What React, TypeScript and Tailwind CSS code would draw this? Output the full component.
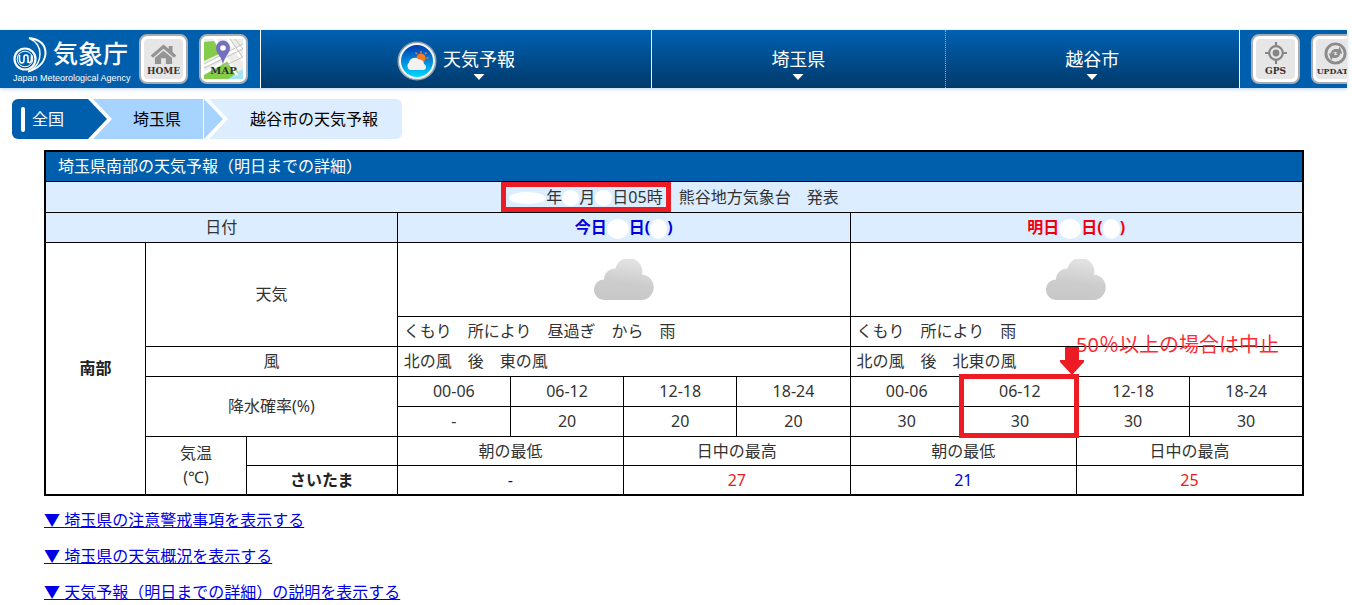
import type { ReactNode } from 'react';

const hours = ['00-06', '06-12', '12-18', '18-24'];
const rainToday = ['-', '20', '20', '20'];
const rainTomorrow = ['30', '30', '30', '30'];

const details = [
  '埼玉県の注意警戒事項を表示する',
  '埼玉県の天気概況を表示する',
  '天気予報（明日までの詳細）の説明を表示する',
];

function ToolButton({ label, size, children }: { label: string; size: string; children: ReactNode }) {
  return (
    <button
      type="button"
      className="relative h-[50px] w-[49px] shrink-0 rounded-lg border-2 border-[#a9adb1] bg-white p-[3px]"
    >
      <span className="relative flex h-full w-full flex-col items-center rounded-sm bg-[#e6e6e6]">
        {children}
        <span className={`absolute inset-x-0 bottom-[2px] flex justify-center font-['DejaVu_Serif',serif] leading-3 font-bold text-[#333] ${size}`}>
          {label}
        </span>
      </span>
    </button>
  );
}

function HomeIcon() {
  return (
    <svg viewBox="0 0 28 21" className="mt-[5px] h-[20px] w-[27px]" fill="#949494">
      <path d="M14 0.500 L0.500 12 L3 14.500 L14 5 L25 14.500 L27.500 12 L23.500 8.500 V2 H19.500 V5 Z" />
      <path d="M14 7 L5 14.500 V21 H11.500 V15 H16.500 V21 H23 V14.500 Z" />
    </svg>
  );
}

function MapIcon() {
  return (
    <svg viewBox="0 0 39 40" className="absolute inset-0 h-full w-full">
      <rect width="39" height="40" fill="#ededea" />
      <path d="M0 3 L10 2 L17 14 L0 22 Z" fill="#85cc4a" />
      <path d="M0 36 L24 22 L37 36 L32 40 H0 Z" fill="#85cc4a" />
      <path d="M24 40 L39 30 V40 Z" fill="#a5e3f5" />
      <path d="M0 27 L39 7 M11 0 L33 36 M0 34 L22 22 M24 0 L39 22" stroke="#fff" strokeWidth="2.500" fill="none" />
      <path d="M0 25 L39 5 M0 29 L39 10 M26 0 L39 19 M31 0 L39 10 M20 27 L39 18" stroke="#c4c4c0" strokeWidth="1" fill="none" />
      <path d="M19 26 C18 17 12 15 12 9 A7 7.500 0 0 1 26 9 C26 15 20 17 19 26 Z" fill="#7470bd" />
      <circle cx="19" cy="9" r="2.800" fill="#fff" />
    </svg>
  );
}

function GpsIcon() {
  return (
    <svg viewBox="0 0 22 22" className="mt-[3px] size-[22px]" stroke="#858585" fill="none" strokeWidth="2.200">
      <circle cx="11" cy="11" r="6.800" />
      <circle cx="11" cy="11" r="3.400" fill="#858585" stroke="none" />
      <path d="M11 0 V5 M11 17 V22 M0 11 H5 M17 11 H22" />
    </svg>
  );
}

function UpdateIcon() {
  return (
    <svg viewBox="0 0 24 24" className="mt-[3px] size-[23px]">
      <circle cx="12" cy="12" r="10" fill="none" stroke="#8c8c8c" strokeWidth="3" />
      <path d="M7 13 C7 8 11 6.500 15 7.500 L16.500 5 L19 12 L12.500 12.500 L13.500 10.500 C11 10 9 11 7 13 Z" fill="#8c8c8c" />
      <path d="M17 11 C17 16 13 17.500 9 16.500 L7.500 19 L5 12 L11.500 11.500 L10.500 13.500 C13 14 15 13 17 11 Z" fill="#8c8c8c" />
    </svg>
  );
}

function Logo() {
  return (
    <a href="#" className="ml-[13px] block w-[116px] text-white">
      <span className="flex h-[37px] items-center gap-1">
        <svg viewBox="0 0 36 36" className="mt-1 size-9 shrink-0" fill="none" stroke="#fff">
          <circle cx="12" cy="22" r="10.500" strokeWidth="2.200" />
          <circle cx="12" cy="22" r="7.800" strokeWidth="1" />
          <path
            d="M6.500 18 V22 Q6.500 26 9 26 Q11 26 11 23 V20.500 Q11 18 13 18 Q15 18 15 20.500 V26 M15 23 Q15 26 17 25.500 Q18.500 25 18.500 22 V18"
            strokeWidth="1.600"
          />
          <path d="M16 1 Q27 6 27 17 Q27 28 17 34" strokeWidth="1.500" />
          <path d="M16 1 Q33 3 32.500 17 Q31 30 15 34.500" strokeWidth="2" />
        </svg>
        <span className="text-[25px] leading-9 font-medium whitespace-nowrap">気象庁</span>
      </span>
      <span className="block font-['Liberation_Sans',sans-serif] text-[9px] leading-3 whitespace-nowrap">
        Japan Meteorological Agency
      </span>
    </a>
  );
}

function WeatherIcon() {
  return (
    <svg viewBox="0 0 40 42" className="mt-1 h-[42px] w-10">
      <defs>
        <linearGradient id="sky" x1="0" y1="0" x2="0" y2="1">
          <stop offset="0" stopColor="#0038b0" />
          <stop offset="1" stopColor="#00d8ff" />
        </linearGradient>
      </defs>
      <circle cx="20" cy="21" r="18.800" fill="#f4f4f4" stroke="#8fa0ae" strokeWidth="1.500" />
      <circle cx="20" cy="21" r="16" fill="url(#sky)" />
      <circle cx="24" cy="18" r="4.500" fill="#f47a24" />
      <path d="M24 11 V13 M29.500 12.500 L28 14 M31.500 18 H29.500 M18.500 12.500 L20 14" stroke="#f47a24" strokeWidth="1.500" />
      <path d="M13 30 A4.500 4.500 0 0 1 12 22.500 A6 6 0 0 1 22 19.500 A4.500 4.500 0 0 1 27 24 A3.200 3.200 0 0 1 27 30 Z" fill="#f2f2f2" />
    </svg>
  );
}

function Cloud() {
  return (
    <svg viewBox="0 0 60 41" className="mx-auto h-[41px] w-[60px]">
      <defs>
        <linearGradient id="cloud" x1="0.600" y1="0" x2="0.400" y2="1">
          <stop offset="0" stopColor="#e4e4e4" />
          <stop offset="0.600" stopColor="#cccccc" />
          <stop offset="1" stopColor="#c8c8c8" />
        </linearGradient>
      </defs>
      <path
        d="M10.500 41 A10.300 10.300 0 0 1 10 20.400 A11 11 0 0 1 21.500 9.500 A13.500 13.500 0 0 1 48 15.500 A12.800 12.800 0 0 1 48 41 Z"
        fill="url(#cloud)"
      />
    </svg>
  );
}

function MenuItem({ label, icon, className }: { label: string; icon?: ReactNode; className: string }) {
  return (
    <button type="button" className={`flex items-center justify-center gap-1.5 text-lg text-white ${className}`}>
      {icon}
      <span className="flex flex-col items-center pt-1">
        <span className="leading-8">{label}</span>
        <svg viewBox="0 0 12 6" className="-mt-px h-[6px] w-3" fill="#fff">
          <path d="M0.500 0 H11.500 L6 6 Z" />
        </svg>
      </span>
    </button>
  );
}

function Chevron({ left, right }: { left: string; right: string }) {
  return (
    <svg viewBox="0 0 24 40" className="h-10 w-6 shrink-0">
      <rect width="24" height="40" fill={right} />
      <path d="M0 0 H5 L24 20 L5 40 H0 Z" fill="#fff" />
      <path d="M0 0 L19 20 L0 40 Z" fill={left} />
    </svg>
  );
}

function Blank({ className }: { className: string }) {
  return <span className={`inline-block rounded-[50%] bg-white align-middle ${className}`} />;
}

function DayHeading({ day, color }: { day: string; color: string }) {
  return (
    <th colSpan={4} className={`border border-black font-bold ${color}`}>
      {day}
      <Blank className="h-5 w-[22px]" />
      日(
      <Blank className="h-5 w-[17px]" />)
    </th>
  );
}

export default function App() {
  return (
    <div lang="ja" className="bg-white pt-[30px] font-['Noto_Sans','Noto_Sans_CJK_JP',sans-serif] text-base text-[#333]">
      <header className="mr-[5px] flex h-[58px] overflow-hidden bg-[#005fad] shadow-[0_1px_4px_#b9d4f0]">
        <div className="flex w-[260px] shrink-0 items-center">
          <div className="flex grow">
            <Logo />
          </div>
          <div className="mr-3 flex gap-[11px]">
            <ToolButton label="HOME" size="text-[9px]">
              <HomeIcon />
            </ToolButton>
            <ToolButton label="MAP" size="text-[10px]">
              <MapIcon />
            </ToolButton>
          </div>
        </div>
        <nav className="flex grow border-x border-white bg-linear-to-b from-[#0061b2] to-[#003a6b]">
          <MenuItem label="天気予報" icon={<WeatherIcon />} className="w-2/5 border-r border-white" />
          <MenuItem label="埼玉県" className="w-3/10 border-r border-dotted border-[#8fb4d6]" />
          <MenuItem label="越谷市" className="w-3/10" />
        </nav>
        <div className="flex w-[107px] shrink-0 items-center gap-[11px] overflow-hidden pl-[11px]">
          <ToolButton label="GPS" size="text-[9px]">
            <GpsIcon />
          </ToolButton>
          <ToolButton label="UPDATE" size="text-[8px]">
            <UpdateIcon />
          </ToolButton>
        </div>
      </header>

      <nav className="mt-[11px] ml-3 flex h-10 text-black">
        <a href="#" className="flex w-[76px] items-center rounded-l-md bg-[#005fad] pl-[9px] text-white">
          <span className="mr-[7px] h-[25px] w-[4px] rounded-sm bg-white" />
          全国
        </a>
        <Chevron left="#005fad" right="#a6d3ff" />
        <a href="#" className="flex w-[92px] items-center border-r border-white bg-[#a6d3ff] pl-[21px]">
          埼玉県
        </a>
        <Chevron left="#a6d3ff" right="#dbedff" />
        <a href="#" className="flex items-center rounded-r-md bg-[#dbedff] pr-6 pl-[22px]">
          越谷市の天気予報
        </a>
      </nav>

      <main className="mt-[11px] mr-12 ml-11">
        <table className="w-full table-fixed border-collapse border-2 border-black text-center leading-6">
          <colgroup>
            <col className="w-[8%]" />
            <col className="w-[8%]" />
            <col className="w-[12%]" />
            <col span={8} className="w-[9%]" />
          </colgroup>
          <tbody>
            <tr className="h-[30px] bg-[#005fad] text-left text-white">
              <th colSpan={11} className="border border-black pl-3 font-normal">
                埼玉県南部の天気予報（明日までの詳細）
              </th>
            </tr>
            <tr className="h-[31px] bg-[#dbedff]">
              <td colSpan={11} className="border border-black">
                <span className="relative mr-4 inline-block">
                  <Blank className="h-3 w-[37px]" />年
                  <Blank className="h-4 w-[17px]" />月
                  <Blank className="h-4 w-[17px]" />
                  日05時
                  <span className="absolute -inset-x-2 -inset-y-[3px] border-5 border-[#ed1c24]" />
                </span>
                熊谷地方気象台　発表
              </td>
            </tr>
            <tr className="h-[30px] bg-[#dbedff]">
              <th colSpan={3} className="border border-black font-normal">日付</th>
              <DayHeading day="今日" color="text-[#0000e0]" />
              <DayHeading day="明日" color="text-[#f0000f]" />
            </tr>
            <tr className="h-[74px]">
              <th rowSpan={7} className="border border-black font-bold text-[#222]">南部</th>
              <th rowSpan={2} colSpan={2} className="border border-black font-normal">天気</th>
              <td colSpan={4} className="border border-black"><Cloud /></td>
              <td colSpan={4} className="border border-black"><Cloud /></td>
            </tr>
            <tr className="h-[30px] text-left">
              <td colSpan={4} className="border border-black pl-[6px]">くもり　所により　昼過ぎ　から　雨</td>
              <td colSpan={4} className="border border-black pl-[6px]">くもり　所により　雨</td>
            </tr>
            <tr className="h-[30px]">
              <th colSpan={2} className="border border-black font-normal">風</th>
              <td colSpan={4} className="border border-black pl-[6px] text-left">北の風　後　東の風</td>
              <td colSpan={4} className="border border-black pl-[6px] text-left">北の風　後　北東の風</td>
            </tr>
            <tr className="h-[30px]">
              <th rowSpan={2} colSpan={2} className="border border-black font-normal">降水確率(%)</th>
              {hours.map((h) => (
                <td key={h} className="border border-black">{h}</td>
              ))}
              {hours.map((h) => (
                <td key={h} className="relative border border-black">
                  {h}
                  {/* note on the morning slot */}
                  {h === '06-12' && (
                    <>
                      <span className="absolute -right-[3px] -left-[5px] -top-[3px] h-16 border-5 border-[#ed1c24]" />
                      <svg viewBox="0 0 24 28" className="absolute -top-[30px] -right-2 h-7 w-6" fill="#ed1c24">
                        <path d="M5 0 H19 V13 H24 V15 L12 28 L0 15 V13 H5 Z" />
                      </svg>
                      <span className="absolute bottom-full left-full mb-5 text-xl leading-6 whitespace-nowrap text-[#ff2a33]">
                        50％以上の場合は中止
                      </span>
                    </>
                  )}
                </td>
              ))}
            </tr>
            <tr className="h-[30px]">
              {[...rainToday, ...rainTomorrow].map((value, i) => (
                <td key={i} className="border border-black">{value}</td>
              ))}
            </tr>
            <tr className="h-[29px]">
              <th rowSpan={2} className="border border-black font-normal">
                気温
                <br />
                (℃)
              </th>
              <td className="border border-black" />
              <td colSpan={2} className="border border-black">朝の最低</td>
              <td colSpan={2} className="border border-black">日中の最高</td>
              <td colSpan={2} className="border border-black">朝の最低</td>
              <td colSpan={2} className="border border-black">日中の最高</td>
            </tr>
            <tr className="h-[30px]">
              <th className="border border-black font-bold text-[#222]">さいたま</th>
              <td colSpan={2} className="border border-black text-[#0000e0]">-</td>
              <td colSpan={2} className="border border-black text-[#e81c1c]">27</td>
              <td colSpan={2} className="border border-black text-[#0000e0]">21</td>
              <td colSpan={2} className="border border-black text-[#e81c1c]">25</td>
            </tr>
          </tbody>
        </table>

        <ul className="mt-3 flex flex-col gap-3 leading-6 text-[#0000e6]">
          {details.map((text) => (
            <li key={text}>
              <a href="#" className="underline">▼ {text}</a>
            </li>
          ))}
        </ul>
      </main>
    </div>
  );
}
